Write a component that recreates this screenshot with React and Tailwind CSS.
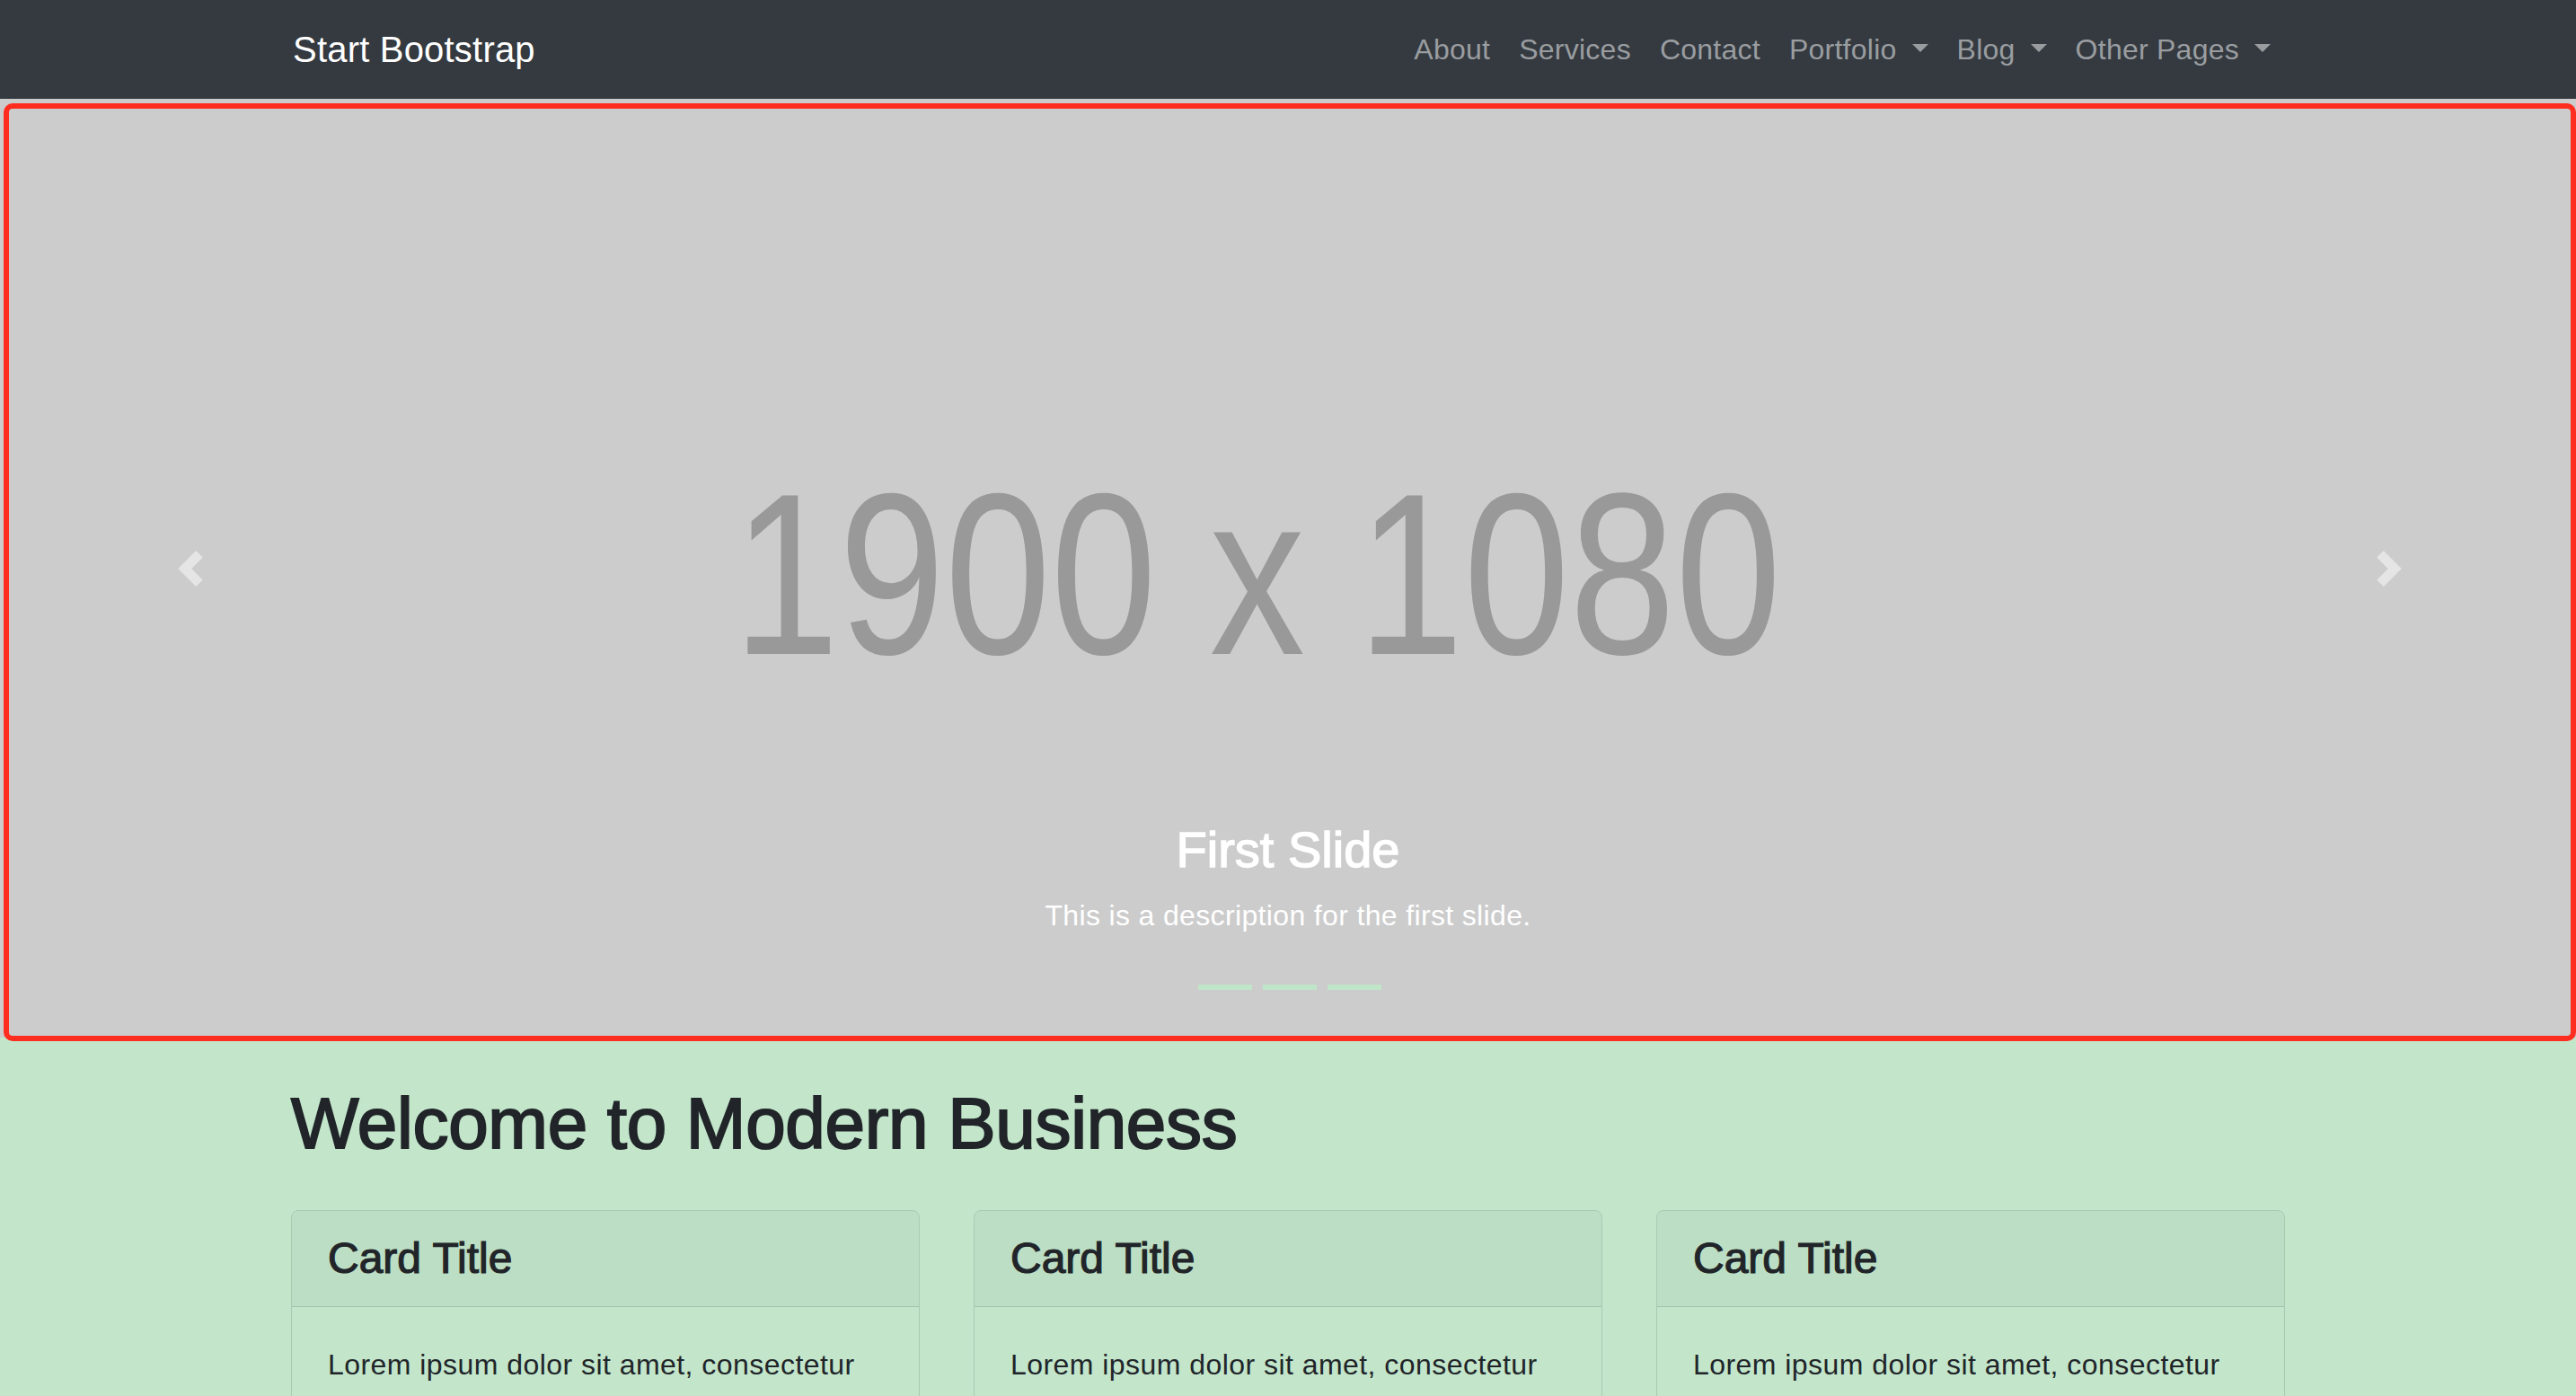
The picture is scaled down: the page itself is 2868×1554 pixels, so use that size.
import React from "react";

function Caret() {
  return (
    <span className="inline-block w-0 h-0 ml-[17px] align-[0.255em] border-t-[9.6px] border-l-[9.6px] border-r-[9.6px] border-t-[#9a9da0] border-l-transparent border-r-transparent" />
  );
}

function NavItem({ label, dropdown }) {
  return (
    <li>
      <a className="block px-[16px] text-[32px] leading-[1.5] tracking-[0.25px] text-[#9a9da0] whitespace-nowrap">
        {label}
        {dropdown && <Caret />}
      </a>
    </li>
  );
}

function Card() {
  return (
    <div className="border border-black/[0.125] rounded-[8px] overflow-hidden">
      <h4 className="bg-black/[0.03] border-b border-black/[0.125] px-[40px] py-[24px] text-[48px] leading-[1.2] font-medium [-webkit-text-stroke:1.2px_currentColor]">
        Card Title
      </h4>
      <div className="p-[40px]">
        <p className="text-[32px] leading-[1.5] tracking-[0.45px]">
          Lorem ipsum dolor sit amet, consectetur adipisicing elit. Sapiente esse necessitatibus neque.
        </p>
      </div>
    </div>
  );
}

export default function App() {
  return (
    <div className="relative min-h-screen bg-[#c3e6cb] text-[#212529] font-['Liberation_Sans',Arial,sans-serif]">
      <nav className="h-[110px] bg-[#343a40]">
        <div className="w-[2280px] mx-auto px-[30px] h-full flex items-center justify-between">
          <a className="pl-[2px] text-[40px] leading-[1.5] tracking-[0.2px] text-white whitespace-nowrap">Start Bootstrap</a>
          <ul className="flex items-center">
            <NavItem label="About" />
            <NavItem label="Services" />
            <NavItem label="Contact" />
            <NavItem label="Portfolio" dropdown />
            <NavItem label="Blog" dropdown />
            <NavItem label="Other Pages" dropdown />
          </ul>
        </div>
      </nav>

      <section className="relative h-[1045px] bg-[#cccccc] overflow-hidden">
        <div className="absolute inset-0 flex items-center justify-center pr-[68px] pt-[12px]">
          <span className="block text-[256px] leading-none text-[#999999] whitespace-nowrap scale-x-[0.828]">
            1900 x 1080
          </span>
        </div>

        <a className="absolute left-0 top-0 bottom-0 w-[15%] flex items-center justify-center pr-[6px]">
          <svg width="40" height="40" viewBox="0 0 8 8" className="fill-white opacity-50">
            <path d="M5.25 0l-4 4 4 4 1.5-1.5-2.5-2.5 2.5-2.5-1.5-1.5z" />
          </svg>
        </a>
        <a className="absolute right-0 top-0 bottom-0 w-[15%] flex items-center justify-center pl-[14px]">
          <svg width="40" height="40" viewBox="0 0 8 8" className="fill-white opacity-50">
            <path d="M2.75 0l-1.5 1.5 2.5 2.5-2.5 2.5 1.5 1.5 4-4-4-4z" />
          </svg>
        </a>

        <div className="absolute left-[15%] right-[15%] bottom-[40px] pt-[40px] pb-[40px] text-center text-white">
          <h3 className="text-[56px] leading-[1.2] mb-[16px] font-medium [-webkit-text-stroke:1.4px_currentColor]">First Slide</h3>
          <p className="text-[32px] leading-[1.5] mb-[32px] tracking-[0.35px]">This is a description for the first slide.</p>
        </div>

        <div className="absolute left-0 right-0 bottom-[53px] flex justify-center gap-[12px] pl-[4px]">
          <span className="w-[60px] h-[6px] bg-[#c0e5c8]" />
          <span className="w-[60px] h-[6px] bg-[#c0e5c8]" />
          <span className="w-[60px] h-[6px] bg-[#c0e5c8]" />
        </div>
      </section>

      <main className="w-[2280px] mx-auto px-[30px]">
        <h1 className="my-[48px] text-[80px] leading-[1.2] font-medium tracking-[-0.3px] [-webkit-text-stroke:2px_currentColor]">Welcome to Modern Business</h1>
        <div className="grid grid-cols-3 gap-x-[60px]">
          <Card />
          <Card />
          <Card />
        </div>
      </main>

      <div className="absolute left-[4px] top-[115px] w-[2864px] h-[1044px] border-[6px] border-[#ff2d1f] rounded-[10px] pointer-events-none" />
    </div>
  );
}
